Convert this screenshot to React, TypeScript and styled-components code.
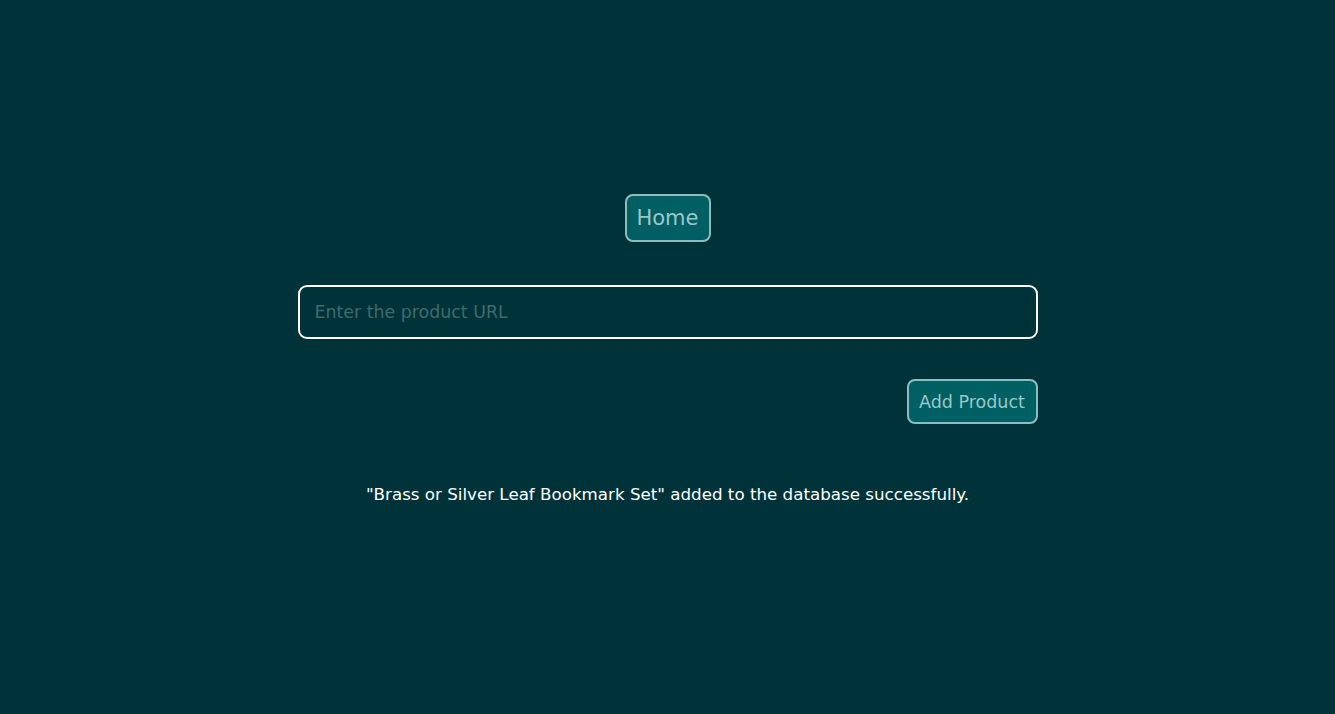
import React from "react";
import styled, { createGlobalStyle } from "styled-components";

const Global = createGlobalStyle`
  html, body { margin: 0; padding: 0; background: #003339; }
  body { font-family: "DejaVu Sans", "Open Sans", sans-serif; }
`;

const Page = styled.div`
  min-height: 714px;
  display: flex;
  flex-direction: column;
  align-items: center;
  padding-top: 194px;
  box-sizing: border-box;
`;

const Panel = styled.div`
  width: 740px;
  display: flex;
  flex-direction: column;
  align-items: center;
`;

const TealButton = styled.button<{ $size: number; $h: number; $w: number }>`
  height: ${(p) => p.$h}px;
  width: ${(p) => p.$w}px;
  background: #005f63;
  border: 2px solid #8fbcbd;
  border-radius: 8px;
  color: #9cc6c7;
  font-family: "DejaVu Sans", sans-serif;
  font-size: ${(p) => p.$size}px;
  padding: 0;
  display: flex;
  align-items: center;
  justify-content: center;
  cursor: pointer;
`;

const Input = styled.input`
  margin-top: 43px;
  width: 740px;
  height: 54px;
  box-sizing: border-box;
  background: #003339;
  border: 2px solid #ffffff;
  border-radius: 9px;
  padding: 0 15px;
  color: #ffffff;
  font-family: "DejaVu Sans", sans-serif;
  font-size: 17.4px;
  outline: none;
  &::placeholder { color: #3e6b6e; }
`;

const Actions = styled.div`
  width: 100%;
  display: flex;
  justify-content: flex-end;
  margin-top: 40px;
`;

const Message = styled.p`
  margin: 60px 0 0;
  color: #ffffff;
  font-family: "DejaVu Sans", sans-serif;
  font-size: 16.7px;
  text-align: center;
  white-space: nowrap;
`;

export default function App() {
  return (
    <>
      <Global />
      <Page>
        <Panel>
          <TealButton $size={21} $h={48} $w={86}>Home</TealButton>
          <Input placeholder="Enter the product URL" />
          <Actions>
            <TealButton $size={17.5} $h={45} $w={131}>Add Product</TealButton>
          </Actions>
          <Message>"Brass or Silver Leaf Bookmark Set" added to the database successfully.</Message>
        </Panel>
      </Page>
    </>
  );
}
